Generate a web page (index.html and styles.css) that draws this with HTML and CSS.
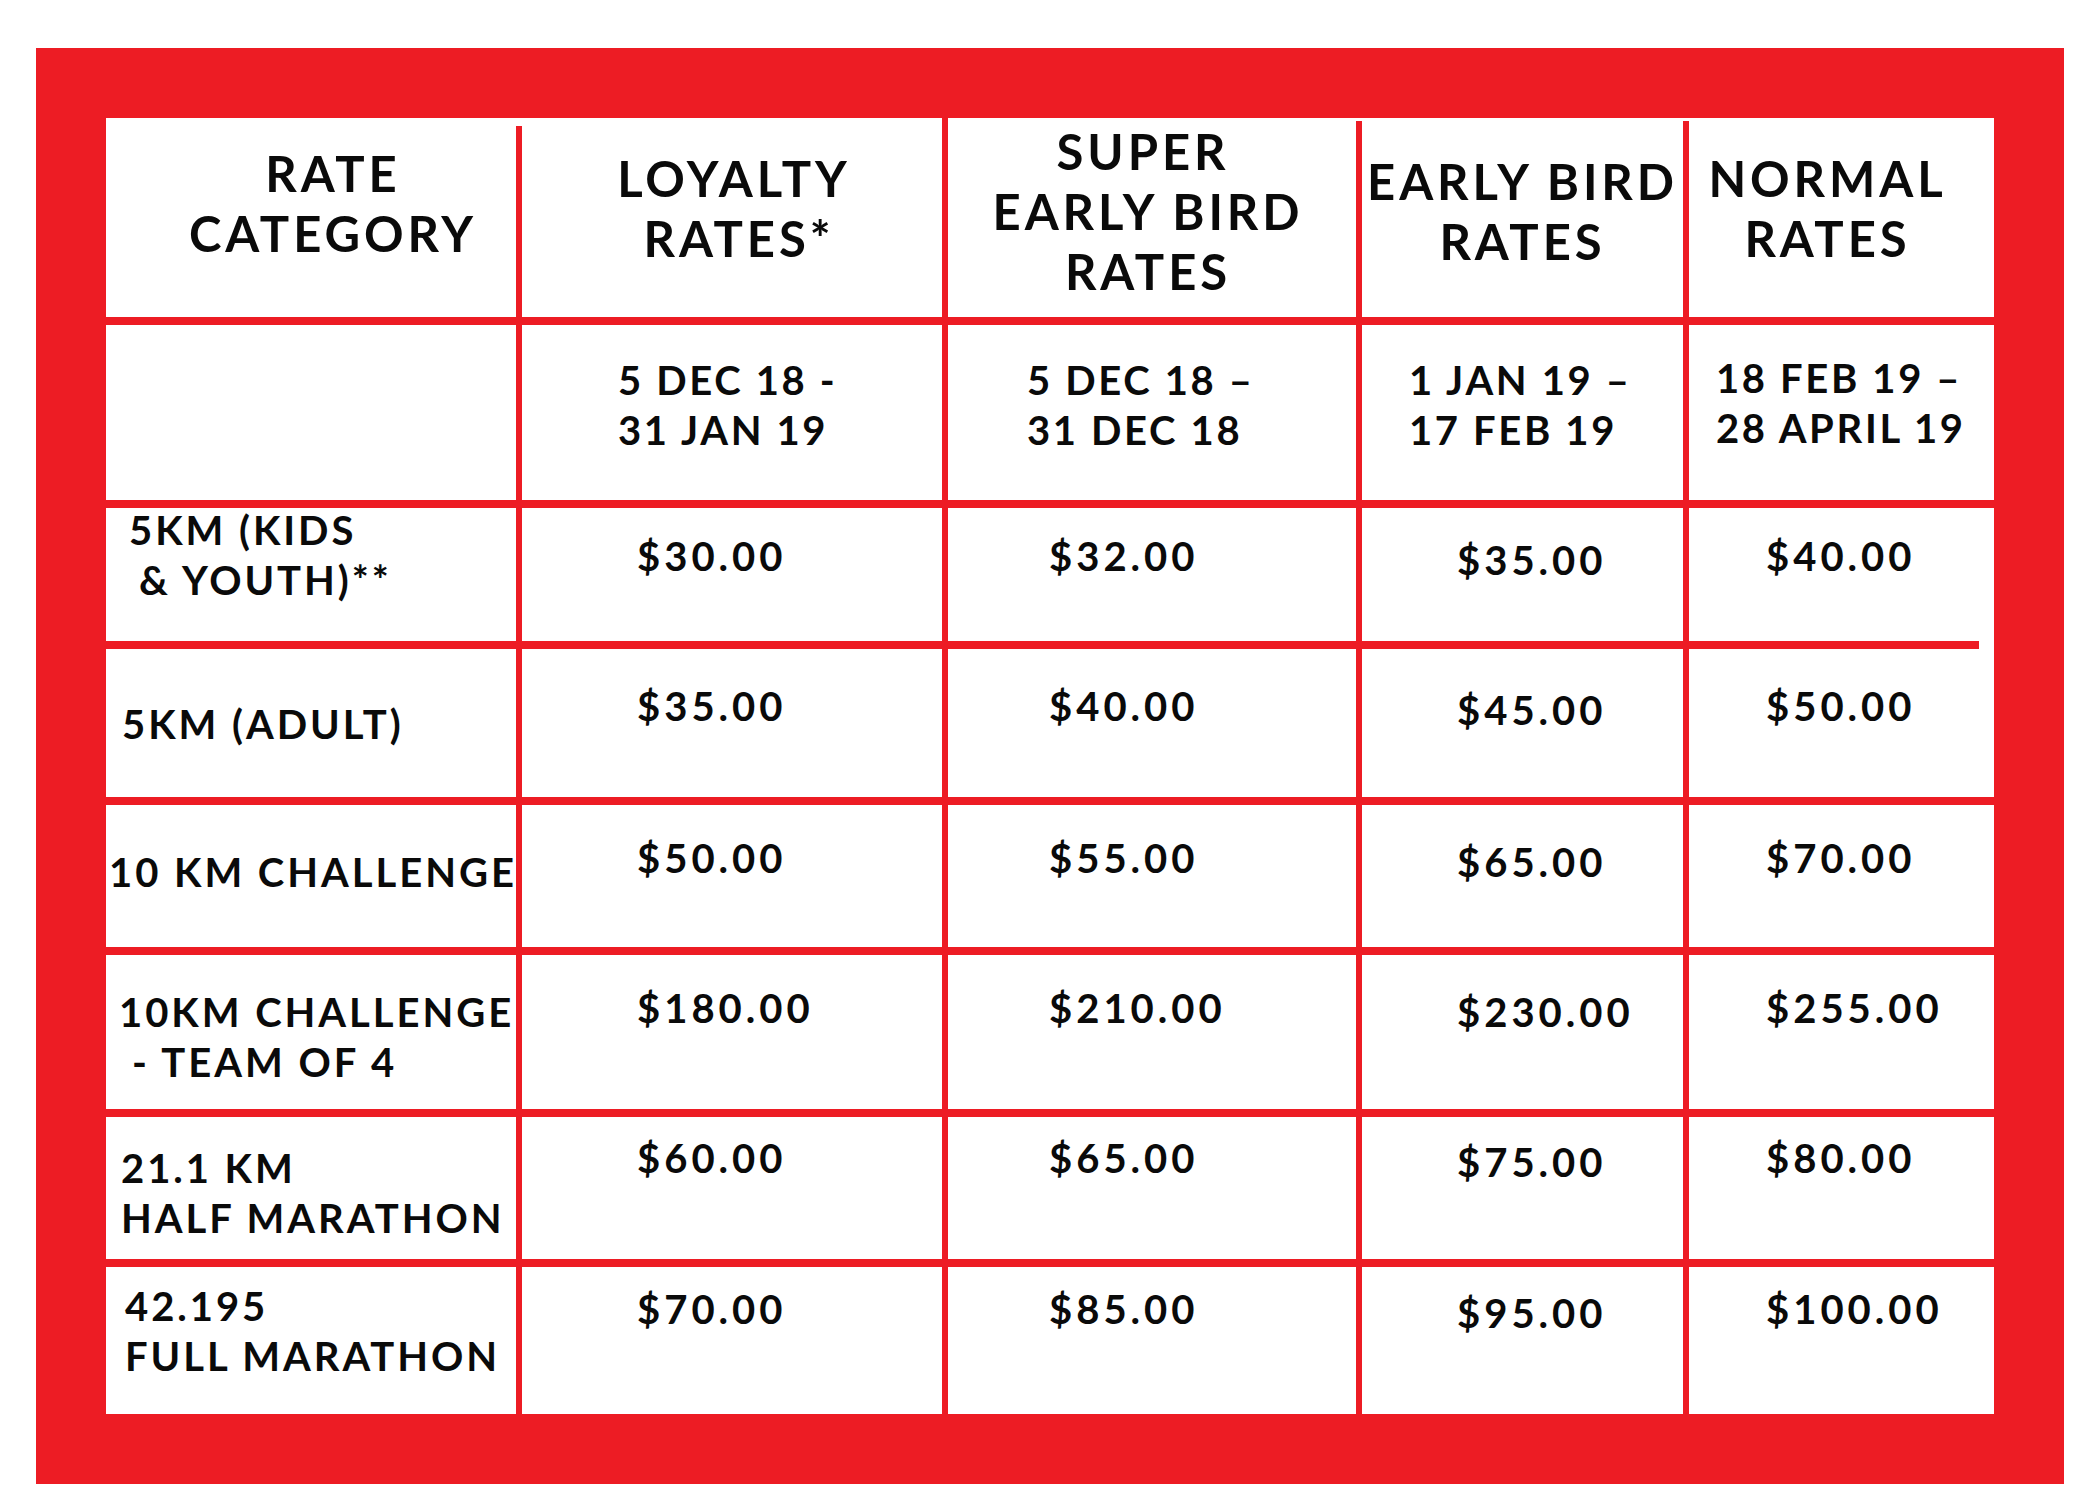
FILE: index.html
```html
<!DOCTYPE html>
<html lang="en">
<head>
<meta charset="utf-8">
<title>Rate Category</title>
<link rel="stylesheet" href="styles.css">
</head>
<body>
<div class="frame">
  <div class="grid">
    <div class="cell head h1">RATE<br>CATEGORY</div>
    <div class="cell head h2">LOYALTY<br><span class="shift-r">RATES*</span></div>
    <div class="cell head h3"><span class="shift-l">SUPER</span><br>EARLY BIRD<br>RATES</div>
    <div class="cell head h4">EARLY BIRD<br>RATES</div>
    <div class="cell head h5">NORMAL<br>RATES</div>

    <div class="cell"></div>
    <div class="cell date d2">5 DEC 18 -<br>31 JAN 19</div>
    <div class="cell date d3">5 DEC 18 –<br>31 DEC 18</div>
    <div class="cell date d4">1 JAN 19 –<br>17 FEB 19</div>
    <div class="cell date d5">18 FEB 19 –<br>28 APRIL 19</div>

    <div class="cell cat cat-kids"><span class="ln first">5KM (KIDS</span><span class="ln ind-kids">&amp; YOUTH)**</span></div>
    <div class="cell price r1 p2">$30.00</div>
    <div class="cell price r1 p3">$32.00</div>
    <div class="cell price r1 p4">$35.00</div>
    <div class="cell price r1 p5 notch">$40.00</div>

    <div class="cell cat cat-adult">5KM (ADULT)</div>
    <div class="cell price r2 p2">$35.00</div>
    <div class="cell price r2 p3">$40.00</div>
    <div class="cell price r2 p4">$45.00</div>
    <div class="cell price r2 p5">$50.00</div>

    <div class="cell cat cat-ten">10 KM CHALLENGE</div>
    <div class="cell price r3 p2">$50.00</div>
    <div class="cell price r3 p3">$55.00</div>
    <div class="cell price r3 p4">$65.00</div>
    <div class="cell price r3 p5">$70.00</div>

    <div class="cell cat cat-team"><span class="ln">10KM CHALLENGE</span><span class="ln ind-team">- TEAM OF 4</span></div>
    <div class="cell price r4 p2">$180.00</div>
    <div class="cell price r4 p3">$210.00</div>
    <div class="cell price r4 p4">$230.00</div>
    <div class="cell price r4 p5">$255.00</div>

    <div class="cell cat cat-half"><span class="ln">21.1 KM</span><span class="ln">HALF MARATHON</span></div>
    <div class="cell price r5 p2">$60.00</div>
    <div class="cell price r5 p3">$65.00</div>
    <div class="cell price r5 p4">$75.00</div>
    <div class="cell price r5 p5">$80.00</div>

    <div class="cell cat cat-full"><span class="ln">42.195</span><span class="ln">FULL MARATHON</span></div>
    <div class="cell price r6 p2">$70.00</div>
    <div class="cell price r6 p3">$85.00</div>
    <div class="cell price r6 p4">$95.00</div>
    <div class="cell price r6 p5">$100.00</div>
  </div>
</div>
</body>
</html>
```
FILE: styles.css
```css
html, body {
  margin: 0;
  padding: 0;
  background: #ffffff;
}

.frame {
  box-sizing: border-box;
  width: 2028px;
  margin: 48px 0 0 36px;
  padding: 70px;
  background: #ed1c24;
}

.grid {
  display: grid;
  grid-template-columns: 410px 420px 408px 321px 305px;
  grid-template-rows: 199px 175px 133px 148px 142px 154px 142px 147px;
  gap: 8px 6px;
  background: #ed1c24;
}

.cell {
  position: relative;
  box-sizing: border-box;
  background: #ffffff;
  color: #0a0a0a;
  font-family: "Lato", "Inter", sans-serif;
  font-weight: 700;
  font-size: 40px;
  line-height: 50px;
  letter-spacing: 0.066em;
  white-space: nowrap;
}

/* header row */
.head {
  font-size: 49px;
  line-height: 60px;
  letter-spacing: 0.08em;
  text-align: center;
}
.h1 { padding: 25px 0 0 44px; }
.h2 { padding: 30px 0 0 4px; }
.h3 { padding: 3px 8px 0 0; }
.h4 { padding: 33px 0 0 0; }
.h5 { padding: 30px 28px 0 0; }
.shift-r { padding-left: 10px; }
.shift-l { padding-right: 10px; }

/* white breaks at the top of some header rules */
.h1::after,
.h3::after,
.h4::after {
  content: "";
  position: absolute;
  top: 0;
  right: -6px;
  width: 6px;
  background: #ffffff;
}
.h1::after { height: 8px; }
.h3::after,
.h4::after { height: 3px; }

/* date row */
.date { padding-top: 30px; }
.d2 { padding-left: 96px; }
.d3 { padding-left: 79px; }
.d4 { padding-left: 47px; }
.d5 { padding-left: 27px; padding-top: 28px; }

/* category column */
.cat { letter-spacing: 0.074em; }
.ln { display: block; }
.cat-kids { padding: 0 0 0 23px; }
.cat-kids .first { margin-top: -3px; }
.ind-kids { padding-left: 10px; }
.cat-adult { padding: 50px 0 0 16px; }
.cat-ten { padding: 42px 0 0 3px; }
.cat-team { padding: 32px 0 0 13px; }
.ind-team { padding-left: 13px; }
.cat-half { padding: 26px 0 0 15px; }
.cat-full { padding: 14px 0 0 19px; }

/* prices */
.price {
  letter-spacing: 0.1em;
  padding-top: var(--pt);
}
.r1 { --pt: 23px; }
.r2 { --pt: 32px; }
.r3 { --pt: 28px; }
.r4 { --pt: 28px; }
.r5 { --pt: 16px; }
.r6 { --pt: 17px; }
.p2 { padding-left: 115px; }
.p3 { padding-left: 101px; }
.p4 { padding-left: 95px; padding-top: calc(var(--pt) + 4px); }
.p5 { padding-left: 77px; }

/* the short rule under the first price row, last column */
.notch::after {
  content: "";
  position: absolute;
  right: 0;
  bottom: -8px;
  width: 15px;
  height: 8px;
  background: #ffffff;
}
```
